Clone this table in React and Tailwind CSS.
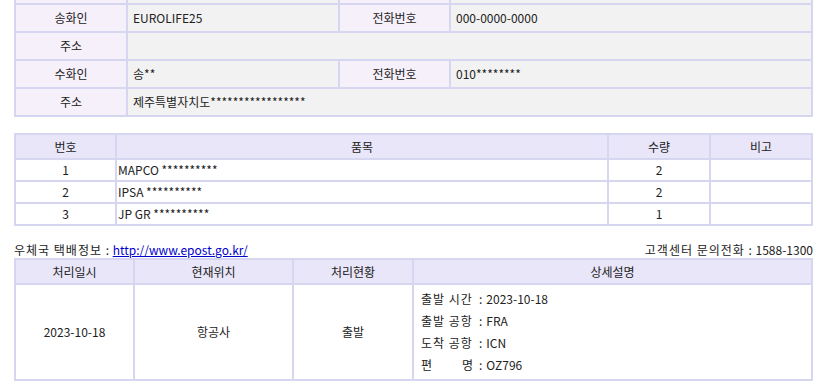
export default function App() {
  const items = [
    { no: 1, name: 'MAPCO **********', qty: 2 },
    { no: 2, name: 'IPSA **********', qty: 2 },
    { no: 3, name: 'JP GR **********', qty: 1 },
  ];

  const details = [
    ['출발 시간', '2023-10-18'],
    ['출발 공항', 'FRA'],
    ['도착 공항', 'ICN'],
    ['편명', 'OZ796'],
  ];

  const label = 'bg-[#f6f0fa] flex items-center justify-center';
  const value = 'bg-[#f2f2f2] flex items-center pl-[5px]';
  const head = 'bg-[#e8e6f8] flex items-center justify-center';
  const cell = 'bg-white flex items-center justify-center';

  return (
    <div className="bg-white w-[830px] h-[389px] overflow-hidden text-[12px] leading-none text-[#222] font-['Noto_Sans_CJK_KR',sans-serif]">
      {/* 송수화인 정보 */}
      <div className="ml-[14px] w-[799px] grid grid-cols-[110px_210px_109px_360px] grid-rows-[3px_26px_26px_26px_26px] gap-[2px] px-[2px] pb-[2px] bg-[#d6d6f0]">
        <div className="bg-[#f6f0fa]" />
        <div className="bg-[#f2f2f2]" />
        <div className="bg-[#f6f0fa]" />
        <div className="bg-[#f2f2f2]" />

        <div className={label}>송화인</div>
        <div className={value}>EUROLIFE25</div>
        <div className={label}>전화번호</div>
        <div className={value}>000-0000-0000</div>

        <div className={label}>주소</div>
        <div className={`${value} col-span-3`}></div>

        <div className={label}>수화인</div>
        <div className={value}>송**</div>
        <div className={label}>전화번호</div>
        <div className={value}>010********</div>

        <div className={label}>주소</div>
        <div className={`${value} col-span-3`}>제주특별자치도*****************</div>
      </div>

      {/* 품목 */}
      <div className="ml-[14px] mt-[16px] w-[799px] grid grid-cols-[99px_490px_100px_100px] grid-rows-[23px_20px_20px_20px] gap-[2px] p-[2px] bg-[#d6d6f0]">
        <div className={head}>번호</div>
        <div className={head}>품목</div>
        <div className={head}>수량</div>
        <div className={head}>비고</div>
        {items.map((it) => (
          <div key={it.no} className="contents">
            <div className={cell}>{it.no}</div>
            <div className="bg-white flex items-center pl-[1px]">{it.name}</div>
            <div className={cell}>{it.qty}</div>
            <div className="bg-white" />
          </div>
        ))}
      </div>

      {/* 안내 */}
      <div className="ml-[14px] mt-[16px] w-[799px] h-[16px] flex items-center justify-between">
        <div>
          <span className="tracking-[1px]">우체국 택배정보 :</span>{' '}
          <a href="#" className="text-[#0000cc] underline">
            http://www.epost.go.kr/
          </a>
        </div>
        <div>
          <span className="tracking-[1px]">고객센터 문의전화 :</span> 1588-1300
        </div>
      </div>

      {/* 배송 현황 */}
      <div className="ml-[14px] w-[799px] grid grid-cols-[117px_157px_118px_397px] grid-rows-[23px_94px] gap-[2px] p-[2px] bg-[#d6d6f0]">
        <div className={head}>처리일시</div>
        <div className={head}>현재위치</div>
        <div className={head}>처리현황</div>
        <div className={head}>상세설명</div>
        <div className={cell}>2023-10-18</div>
        <div className={cell}>항공사</div>
        <div className={cell}>출발</div>
        <div className="bg-white flex flex-col justify-center pl-[7px]">
          {details.map(([k, v]) => (
            <div key={k} className="h-[22px] flex items-center">
              {k === '편명' ? (
                <span className="w-[52px] flex justify-between">
                  <span>편</span>
                  <span>명</span>
                </span>
              ) : (
                <span className="w-[52px] whitespace-nowrap tracking-[1px]">{k}</span>
              )}
              <span className="ml-[6px]">:</span>
              <span className="ml-[4px]">{v}</span>
            </div>
          ))}
        </div>
      </div>
    </div>
  );
}
